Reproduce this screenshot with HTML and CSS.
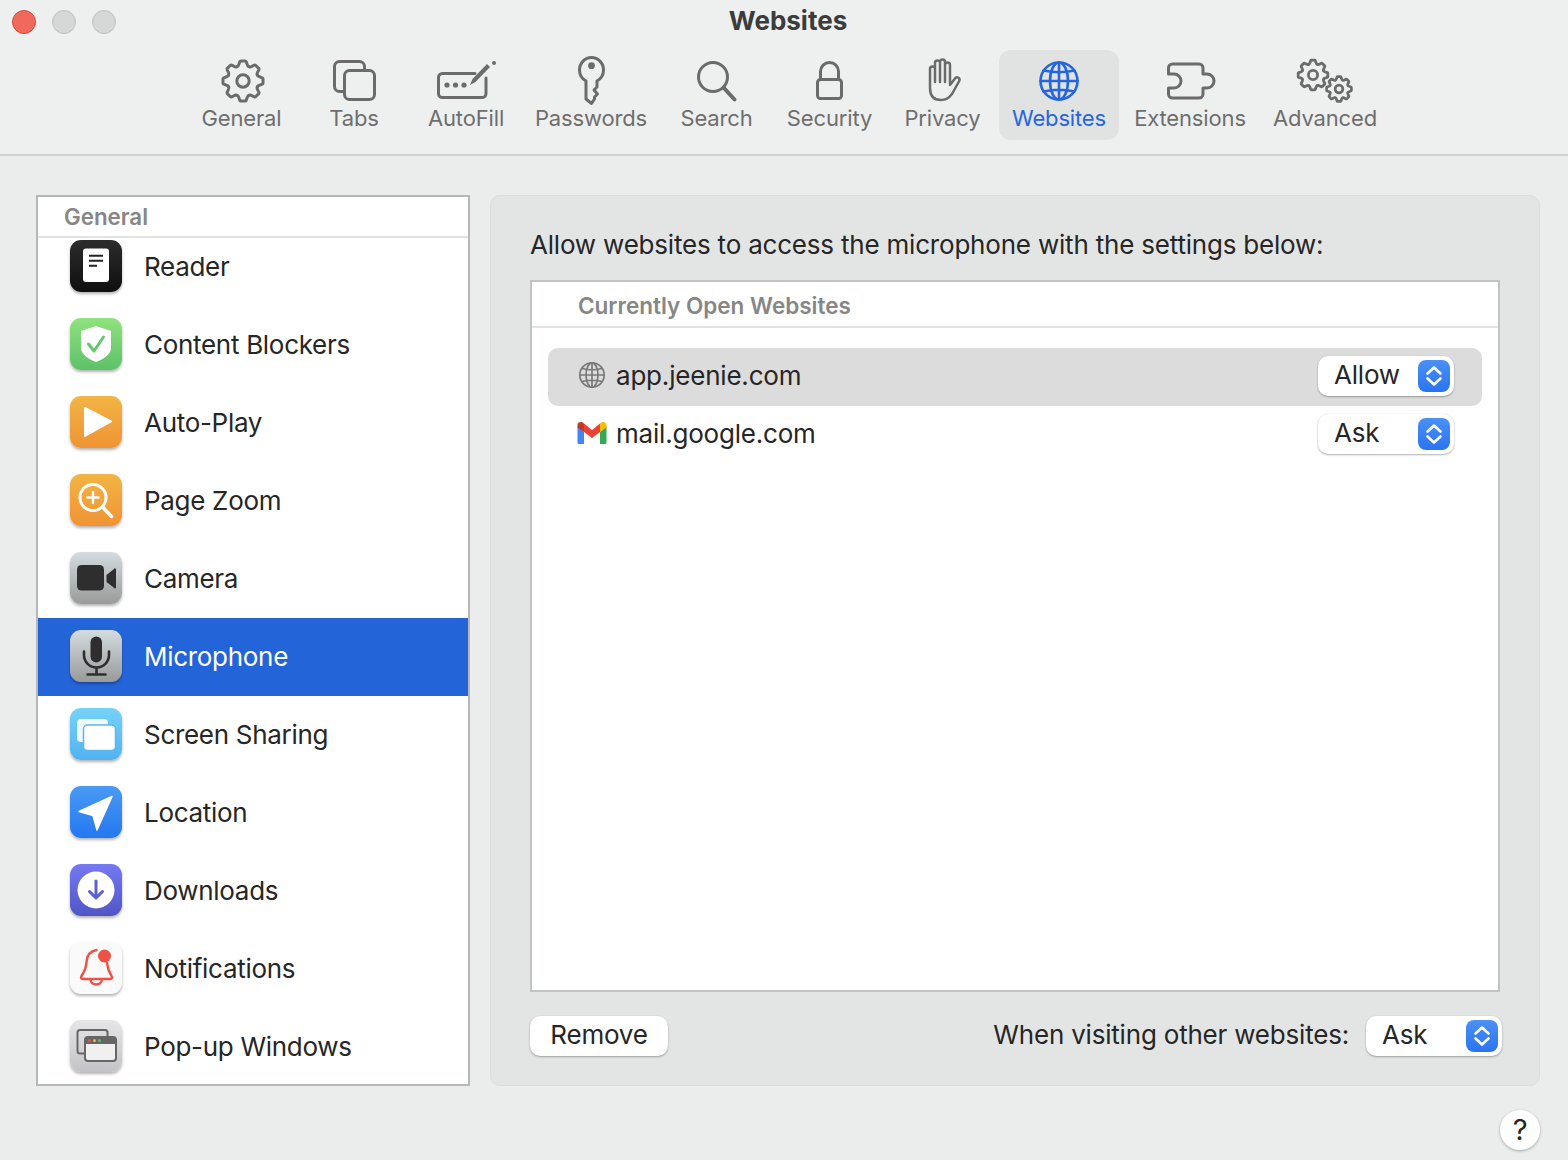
FILE: index.html
```html
<!DOCTYPE html>
<html lang="en">
<head>
<meta charset="utf-8">
<title>Websites</title>
<link rel="stylesheet" href="styles.css">
</head>
<body>
<svg class="defs" width="0" height="0" aria-hidden="true">
  <defs>
    <path id="tooth" d="M-5.93-14.32Q-4.500-14.800-4-17L-3.200-19.300Q-2.900-20-2.200-20H2.200Q2.900-20 3.200-19.300L4-17Q4.500-14.800 5.930-14.320"/>
    <g id="gear">
      <use href="#tooth"/><use href="#tooth" transform="rotate(45)"/><use href="#tooth" transform="rotate(90)"/><use href="#tooth" transform="rotate(135)"/>
      <use href="#tooth" transform="rotate(180)"/><use href="#tooth" transform="rotate(225)"/><use href="#tooth" transform="rotate(270)"/><use href="#tooth" transform="rotate(315)"/>
      <circle r="6.200"/>
    </g>
    <g id="updown" class="chev"><path d="M9.500 13.500 16 7.500l6.500 6M9.500 18.500l6.500 6 6.500-6"/></g>
  </defs>
</svg>

<header class="head">
  <div class="titlebar">
    <div class="lights"><span class="light red"></span><span class="light"></span><span class="light"></span></div>
    <h1 class="title">Websites</h1>
    <div></div>
  </div>
  <nav class="toolbar">
    <div class="tool">
      <svg class="tool-ic" viewBox="0 0 60 50"><use href="#gear" transform="translate(31 25)"/></svg>
      <span>General</span>
    </div>
    <div class="tool">
      <svg class="tool-ic" viewBox="0 0 60 50"><rect x="10.500" y="5.500" width="30" height="30" rx="5"/><rect class="solid" x="20.500" y="14.500" width="30" height="29" rx="5"/></svg>
      <span>Tabs</span>
    </div>
    <div class="tool">
      <svg class="tool-ic" viewBox="0 0 60 50"><path d="M39 17.500H6.500a4 4 0 0 0-4 4V37.500a4 4 0 0 0 4 4H46a4 4 0 0 0 4-4V22"/><path class="dot" d="M34 29 36.500 23 51 8 54 11 39.500 26Z"/><circle class="dot" cx="58" cy="7" r="2"/><circle class="dot" cx="11" cy="29" r="2.600"/><circle class="dot" cx="19.500" cy="29" r="2.600"/><circle class="dot" cx="28" cy="29" r="2.600"/></svg>
      <span>AutoFill</span>
    </div>
    <div class="tool">
      <svg class="tool-ic" viewBox="0 0 60 50"><path d="M25 25C20.500 22.500 18.500 18.500 18.500 14 18.500 7 24 1.500 30.500 1.500S42.500 7 42.500 14C42.500 18.500 40.500 22.500 36 25V31L33 34 36.500 38 33.500 41V43L30.500 47.500 25 43Z"/><circle class="dot" cx="30.500" cy="9.700" r="3.400"/></svg>
      <span>Passwords</span>
    </div>
    <div class="tool">
      <svg class="tool-ic" viewBox="0 0 60 50"><circle cx="26" cy="21" r="14.500"/><path class="thick" d="M36.500 31.500 47.500 43.500"/></svg>
      <span>Search</span>
    </div>
    <div class="tool">
      <svg class="tool-ic" viewBox="0 0 60 50"><rect x="17.500" y="23.500" width="24" height="19" rx="3"/><path d="M20.500 23V15.500a9 9 0 0 1 18 0V23"/></svg>
      <span>Security</span>
    </div>
    <div class="tool">
      <svg class="tool-ic thin" viewBox="0 0 60 50"><path d="M17 28V13a2.500 2.500 0 0 1 5 0V7a2.500 2.500 0 0 1 5 0V6a2.500 2.500 0 0 1 5 0V9a2.500 2.500 0 0 1 5 0V29L42 22.500a2.500 2.500 0 0 1 4.500 2L39 38C36 42 33 44 28 44 21 44 17 40 17 32ZM22 13V26M27 7V26M32 6V26"/></svg>
      <span>Privacy</span>
    </div>
    <div class="tool tool-on">
      <svg class="tool-ic" viewBox="0 0 60 50"><circle cx="30" cy="25" r="18.500"/><ellipse cx="30" cy="25" rx="9" ry="18.500"/><path d="M30 6.500V43.500M11.500 25H48.500M14.500 14.500Q30 18 45.500 14.500M14.500 35.500Q30 32 45.500 35.500"/></svg>
      <span>Websites</span>
    </div>
    <div class="tool">
      <svg class="tool-ic" viewBox="0 0 60 50"><path d="M12.500 8H39a4 4 0 0 1 4 4V18H47a7 7 0 0 1 0 14H43V38a4 4 0 0 1-4 4H12.500a4 4 0 0 1-4-4V32H14a7 7 0 0 0 0-14H8.500V12a4 4 0 0 1 4-4Z"/></svg>
      <span>Extensions</span>
    </div>
    <div class="tool">
      <svg class="tool-ic" viewBox="0 0 60 50"><use class="gear-big" href="#gear" transform="translate(18 19) scale(.74)"/><use class="gear-small" href="#gear" transform="translate(44 33) scale(.62)"/></svg>
      <span>Advanced</span>
    </div>
  </nav>
</header>

<main class="content">
  <aside class="side">
    <div class="side-head">General</div>
    <div class="side-list">
      <div class="row">
        <div class="app a-reader"><svg viewBox="0 0 52 52"><rect x="13" y="8.500" width="26" height="33.500" rx="3" fill="#fff"/><path d="M19 15.700H33M19 20.700H33M19 25.700H27" stroke="#222" stroke-width="2"/></svg></div>
        <span>Reader</span>
      </div>
      <div class="row">
        <div class="app a-green"><svg viewBox="0 0 52 52"><path d="M26 8 41 13V30C41 36 34 41 26 44 18 41 11 36 11 30V13Z" fill="#fff"/><path d="M18.500 26 24 33 33.500 19" fill="none" stroke="#62c870" stroke-width="3" stroke-linecap="round" stroke-linejoin="round"/></svg></div>
        <span>Content Blockers</span>
      </div>
      <div class="row">
        <div class="app a-orange"><svg viewBox="0 0 52 52"><path d="M15 12 41 25.500 15 40Z" fill="#fff" stroke="#fff" stroke-width="2" stroke-linejoin="round"/></svg></div>
        <span>Auto-Play</span>
      </div>
      <div class="row">
        <div class="app a-orange"><svg viewBox="0 0 52 52"><g fill="none" stroke="#fff" stroke-linecap="round"><circle cx="23" cy="23.500" r="13" stroke-width="3"/><path d="M33 33.500 41.500 42.500" stroke-width="3.500"/><path d="M23 18V29M17.500 23.500H28.500" stroke-width="2.400"/></g></svg></div>
        <span>Page Zoom</span>
      </div>
      <div class="row">
        <div class="app a-gray"><svg viewBox="0 0 52 52"><rect x="7" y="13" width="27" height="25.500" rx="4.500" fill="#2e2e2e"/><path d="M36.500 23 44 17a1 1 0 0 1 2 .8V35a1 1 0 0 1-2 .8L36.500 30Z" fill="#2e2e2e"/></svg></div>
        <span>Camera</span>
      </div>
      <div class="row row-on">
        <div class="app a-gray"><svg viewBox="0 0 52 52"><rect x="20.500" y="6.500" width="11.500" height="26" rx="5.750" fill="#2e2e2e"/><path d="M14 21.500V25a12.500 12.500 0 0 0 25 0V21.500M26.500 37.500V44M17.500 44.500H35.500" fill="none" stroke="#2e2e2e" stroke-width="2.600" stroke-linecap="round"/></svg></div>
        <span>Microphone</span>
      </div>
      <div class="row">
        <div class="app a-sky"><svg viewBox="0 0 52 52"><rect x="7" y="11" width="31" height="23" rx="4" fill="#fff" opacity=".9"/><rect x="13.500" y="17" width="32" height="25.500" rx="4" fill="#fff" stroke="#5bb8f0" stroke-width="1.500"/></svg></div>
        <span>Screen Sharing</span>
      </div>
      <div class="row">
        <div class="app a-blue"><svg viewBox="0 0 52 52"><path d="M42 10.500 9 25.500 23 29.500 27 44Z" fill="#fff" stroke="#fff" stroke-width="1.500" stroke-linejoin="round"/></svg></div>
        <span>Location</span>
      </div>
      <div class="row">
        <div class="app a-indigo"><svg viewBox="0 0 52 52"><circle cx="26" cy="26" r="18.500" fill="#fff"/><path d="M26 17V34M19.500 27.500 26 34 32.500 27.500" fill="none" stroke="#5a5fd8" stroke-width="3" stroke-linecap="round" stroke-linejoin="round"/></svg></div>
        <span>Downloads</span>
      </div>
      <div class="row">
        <div class="app a-white"><svg viewBox="0 0 52 52"><path d="M26.500 8C20 9 17 14 16.500 20 16 26 15 29 11.500 34 10.500 36 11 37 13 37H40C42 37 42.500 36 41.500 34 39 30 37.500 27 37 21M20.500 37.500C21 44 31.500 44 32 37.500" fill="none" stroke="#ee5145" stroke-width="2.500" stroke-linecap="round"/><circle cx="34.500" cy="14" r="6.500" fill="#ee5145"/></svg></div>
        <span>Notifications</span>
      </div>
      <div class="row">
        <div class="app a-silver"><svg viewBox="0 0 52 52"><rect x="7.500" y="10" width="30" height="23.500" rx="2.500" fill="none" stroke="#666" stroke-width="2"/><rect x="15" y="17" width="31" height="24" rx="3" fill="#f0f0f0" stroke="#666" stroke-width="2"/><path d="M15 24V20a3 3 0 0 1 3-3H43a3 3 0 0 1 3 3V24Z" fill="#666"/><circle cx="19.500" cy="20.500" r="1.500" fill="#ee5145"/><circle cx="24.500" cy="20.500" r="1.500" fill="#f0b840"/><circle cx="29.500" cy="20.500" r="1.500" fill="#5cc05c"/></svg></div>
        <span>Pop-up Windows</span>
      </div>
    </div>
  </aside>

  <section class="panel">
    <p class="lead">Allow websites to access the microphone with the settings below:</p>
    <div class="table">
      <div class="table-head">Currently Open Websites</div>
      <div class="table-body">
        <div class="site site-on">
          <svg class="fav" viewBox="0 0 30 30"><g fill="none" stroke="#7a7a7a" stroke-width="1.700"><circle cx="15" cy="15" r="12.200"/><ellipse cx="15" cy="15" rx="6" ry="12.200"/><path d="M15 2.800V27.200M2.800 15H27.200M5 8.500Q15 11 25 8.500M5 21.500Q15 19 25 21.500"/></g></svg>
          <span class="site-name">app.jeenie.com</span>
          <div class="select"><span>Allow</span><svg class="stepper" viewBox="0 0 32 32"><use href="#updown"/></svg></div>
        </div>
        <div class="site">
          <svg class="fav" viewBox="0 0 30 30"><path d="M.5 8V24.500a1.500 1.500 0 0 0 1.500 1.500H7V14Z" fill="#4285f4"/><path d="M23 14V26H28a1.500 1.500 0 0 0 1.500-1.500V8Z" fill="#34a853"/><path d="M23 5.500V14L29.500 9.500V7C29.500 4 26 3.500 24.500 4.500Z" fill="#fbbc04"/><path d="M7 14V5.500L15 12 23 5.500V14L15 20Z" fill="#ea4335"/><path d="M.5 7C.5 4 4 3.500 5.500 4.500L7 5.500V14L.5 9.500Z" fill="#c5392b"/></svg>
          <span class="site-name">mail.google.com</span>
          <div class="select"><span>Ask</span><svg class="stepper" viewBox="0 0 32 32"><use href="#updown"/></svg></div>
        </div>
      </div>
    </div>
    <div class="panel-foot">
      <div class="btn">Remove</div>
      <div class="foot-right">
        <span class="foot-label">When visiting other websites:</span>
        <div class="select"><span>Ask</span><svg class="stepper" viewBox="0 0 32 32"><use href="#updown"/></svg></div>
      </div>
    </div>
  </section>
</main>

<footer class="help-row"><div class="help">?</div></footer>
</body>
</html>
```

FILE: styles.css
```css
* { box-sizing: border-box; }
html, body { margin: 0; height: 100%; }
body {
  width: 1568px;
  height: 1160px;
  overflow: hidden;
  background: #ebedec;
  color: #262626;
  font-family: Inter, "Noto Sans", sans-serif;
  font-size: 26px;
  letter-spacing: -.2px;
}
.defs { display: block; height: 0; }
.chev { fill: none; stroke: #fff; stroke-width: 2.600; stroke-linecap: round; stroke-linejoin: round; }

/* header */
.head { height: 156px; background: #eef0ef; border-bottom: 2px solid #cfd1d0; }
.titlebar {
  height: 50px;
  padding: 2px 0 6px 8px;
  display: grid;
  grid-template-columns: 1fr auto 1fr;
  align-items: start;
}
.lights { display: flex; gap: 16px; padding: 8px 0 0 4px; }
.light { width: 24px; height: 24px; border-radius: 50%; background: #d6d8d7; border: 1px solid #bfc1c0; }
.light.red { background: #f1695c; border-color: #d9493c; }
.title { margin: 0; font-size: 26px; line-height: 38px; font-weight: 700; color: #3c3c3c; letter-spacing: 0; }

.toolbar {
  display: grid;
  grid-template-columns: 113px 112px 112px 138px 113px 113px 113px 120px 142px 128px;
  padding-left: 185px;
}
.tool {
  height: 90px;
  padding-top: 6px;
  display: flex;
  flex-direction: column;
  align-items: center;
  font-size: 22px;
  line-height: 26px;
  letter-spacing: -.15px;
  color: #6e6e6e;
  white-space: nowrap;
}
.tool span { margin-top: -1px; }
.tool-ic {
  width: 60px;
  height: 50px;
  flex: none;
  fill: none;
  stroke: #6b6b6b;
  stroke-width: 3;
  stroke-linecap: round;
  stroke-linejoin: round;
}
.tool-ic.thin { stroke-width: 2.500; }
.tool-ic .gear-big { stroke-width: 3.800; }
.tool-ic .gear-small { stroke-width: 4.400; }
.tool-ic .solid { fill: #eef0ef; }
.tool-ic .dot { fill: #6b6b6b; stroke: none; }
.tool-ic .thick { stroke-width: 4; }
.tool-on { background: #e1e3e2; border-radius: 12px; color: #2566e0; }
.tool-on .tool-ic { stroke: #2566e0; stroke-width: 2.600; }

/* content */
.content {
  height: 930px;
  padding: 39px 28px 0 36px;
  display: grid;
  grid-template-columns: 434px 1fr;
  column-gap: 20px;
  grid-template-rows: 891px;
}
.side {
  background: #fff;
  border: 2px solid #b6b8b7;
  overflow: hidden;
  display: flex;
  flex-direction: column;
}
.side-head {
  height: 41px;
  flex: none;
  padding: 6px 0 0 26px;
  font-size: 22.300px;
  line-height: 28px;
  font-weight: 600;
  letter-spacing: 0;
  color: #868686;
  border-bottom: 2px solid #e2e2e2;
  background: #fff;
  position: relative;
  z-index: 1;
}
.side-list { margin-top: -10px; letter-spacing: -.3px; }
.row {
  height: 78px;
  padding: 0 0 2px 32px;
  display: flex;
  align-items: center;
  gap: 22px;
}
.row-on { background: #2365d9; color: #fff; }
.app {
  width: 52px;
  height: 52px;
  flex: none;
  border-radius: 11px;
  box-shadow: 0 2px 3px rgba(0,0,0,.3);
}
.app svg { display: block; width: 52px; height: 52px; }
.a-reader { background: linear-gradient(#2c2c2c, #0f0f0f); }
.a-green { background: linear-gradient(#90e27e, #5ec168); }
.a-orange { background: linear-gradient(#f2b544, #f09334); }
.a-gray { background: linear-gradient(#d3dcdf, #9a9a9a); }
.a-sky { background: linear-gradient(#75d3f6, #52b2f1); }
.a-blue { background: linear-gradient(#4a9af5, #2478f0); }
.a-indigo { background: linear-gradient(#7679f2, #5055c6); }
.a-white { background: #fafafa; }
.a-silver { background: linear-gradient(#e6e6e8, #c3c3c7); }

.panel {
  background: #e3e5e4;
  border: 1px solid #dcdedd;
  border-radius: 10px;
  padding: 33px 39px 29px 39px;
  display: flex;
  flex-direction: column;
}
.lead { margin: 0 0 19px; line-height: 32px; }
.table {
  flex: 1;
  background: #fff;
  border: 2px solid #c2c4c3;
  display: flex;
  flex-direction: column;
}
.table-head {
  height: 46px;
  padding: 10px 0 0 46px;
  font-size: 22.500px;
  line-height: 28px;
  font-weight: 600;
  letter-spacing: 0;
  color: #868686;
  border-bottom: 2px solid #e2e2e2;
}
.table-body { padding: 20px 16px; }
.site {
  height: 58px;
  padding: 0 28px 4px 29px;
  display: flex;
  align-items: center;
  gap: 9px;
  border-radius: 10px;
}
.site-on { background: #dcdcdc; }
.fav { width: 30px; height: 30px; flex: none; }
.site-name { flex: 1; }
.site .select { margin-top: 2px; }
.select {
  width: 136px;
  height: 40px;
  padding: 0 4px 0 16px;
  display: flex;
  align-items: center;
  justify-content: space-between;
  background: #fff;
  border-radius: 10px;
  box-shadow: 0 1px 2px rgba(0,0,0,.3), 0 0 1px rgba(0,0,0,.12);
}
.select span { padding-bottom: 3px; }
.stepper {
  width: 32px;
  height: 32px;
  border-radius: 8px;
  background: linear-gradient(#4a90f6, #2a74f1);
}
.panel-foot {
  margin: 24px -2px 0 0;
  display: flex;
  justify-content: space-between;
  align-items: center;
}
.btn {
  width: 138px;
  height: 40px;
  text-align: center;
  line-height: 38px;
  background: #fff;
  border-radius: 10px;
  box-shadow: 0 1px 2px rgba(0,0,0,.3), 0 0 1px rgba(0,0,0,.12);
}
.foot-right { display: flex; align-items: center; gap: 17px; }
.foot-label { padding-bottom: 3px; }

.help-row { display: flex; justify-content: flex-end; padding-right: 28px; margin-top: 24px; }
.help {
  width: 40px;
  height: 40px;
  border-radius: 50%;
  background: #fff;
  text-align: center;
  line-height: 40px;
  font-size: 29px;
  font-weight: 400;
  box-shadow: 0 1px 3px rgba(0,0,0,.3);
}
```
